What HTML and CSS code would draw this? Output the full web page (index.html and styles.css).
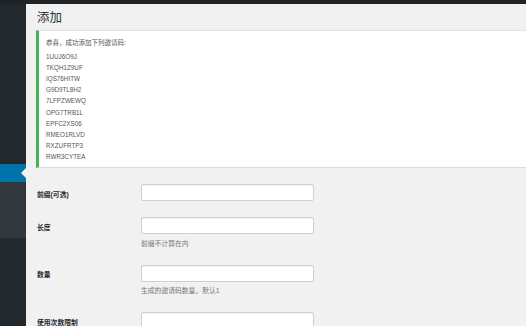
FILE: index.html
```html
<!DOCTYPE html>
<html lang="zh">
<head>
<meta charset="utf-8">
<link rel="stylesheet" href="styles.css">
</head>
<body>
<div class="topbar"></div>
<div class="layout">
  <aside class="sidebar">
    <div class="menu-top"></div>
    <div class="menu-active"></div>
    <div class="submenu"></div>
  </aside>
  <main class="content">
    <h1 class="title">添加</h1>
    <div class="notice">
      <p class="notice-head">恭喜，成功添加下列邀请码:</p>
      <p class="codes">1UUJ6O9J<br>TKQH1Z9UF<br>IQS76HITW<br>G9D9TL8H2<br>7LFPZWEWQ<br>OPG7TRB1L<br>EPFC2XS06<br>RMEO1RLVD<br>RXZUFRTP3<br>RWR3CYTEA</p>
    </div>
    <div class="form">
      <div class="row">
        <div class="label">前缀(可选)</div>
        <div class="field"><input class="input" type="text"></div>
      </div>
      <div class="row">
        <div class="label">长度</div>
        <div class="field"><input class="input" type="text"><p class="desc">前缀不计算在内</p></div>
      </div>
      <div class="row">
        <div class="label">数量</div>
        <div class="field"><input class="input" type="text"><p class="desc">生成的邀请码数量，默认1</p></div>
      </div>
      <div class="row">
        <div class="label">使用次数限制</div>
        <div class="field"><input class="input" type="text"></div>
      </div>
    </div>
  </main>
</div>
</body>
</html>
```
FILE: styles.css
```css
html, body {
  margin: 0;
  padding: 0;
  height: 100%;
  overflow: hidden;
}
body {
  background: #f1f1f1;
  font-family: "Liberation Sans", "Noto Sans CJK SC", sans-serif;
  color: #444;
}
.topbar {
  height: 4px;
  background: #1d2327;
}
.layout {
  display: flex;
  height: 322px;
}
.sidebar {
  width: 26px;
  flex: none;
  background: #23282d;
  display: flex;
  flex-direction: column;
}
.menu-top {
  height: 160px;
}
.menu-active {
  height: 18px;
  background: #0073aa;
  position: relative;
}
.menu-active::after {
  content: "";
  position: absolute;
  right: 0;
  top: 4px;
  border-style: solid;
  border-width: 5px 5px 5px 0;
  border-color: transparent #f1f1f1 transparent transparent;
}
.submenu {
  height: 56px;
  background: #32373c;
}
.content {
  flex: 1;
  padding-left: 10px;
  min-width: 0;
}
.title {
  margin: 3px 0 0 1px;
  font-size: 12.5px;
  line-height: 20px;
  font-weight: 400;
  color: #2c3338;
  font-family: "Noto Sans CJK SC", sans-serif;
}
.notice {
  margin-top: 3px;
  background: #fff;
  border-left: 3px solid #46b450;
  border-top: 1px solid #e2e2e2;
  border-bottom: 1px solid #dcdcdc;
  padding: 6px 7px 5px;
  font-size: 6.5px;
  line-height: 11.1px;
  color: #555;
}
.notice p {
  margin: 0;
}
.notice-head {
  margin-bottom: 3px !important;
}
.codes {
  font-size: 6.3px;
}
.form {
  padding-top: 16px;
  display: flex;
  flex-direction: column;
  gap: 16px;
}
.row {
  display: flex;
  align-items: flex-start;
}
.label {
  width: 105px;
  height: 17px;
  box-sizing: border-box;
  flex: none;
  padding: 1.5px 0 0 1px;
  font-size: 6.8px;
  font-weight: 700;
  line-height: 17px;
  color: #23282d;
}
.field {
  display: flex;
  flex-direction: column;
}
.input {
  box-sizing: border-box;
  width: 173px;
  height: 17px;
  margin: 0;
  padding: 0 4px;
  border: 1px solid #cfcfcf;
  border-radius: 2px;
  background: #fff;
  box-shadow: inset 0 1px 1px rgba(0,0,0,0.05);
  font-size: 8px;
}
.desc {
  margin: 3.5px 0 0;
  font-size: 6.8px;
  line-height: 11px;
  color: #777;
}
```
